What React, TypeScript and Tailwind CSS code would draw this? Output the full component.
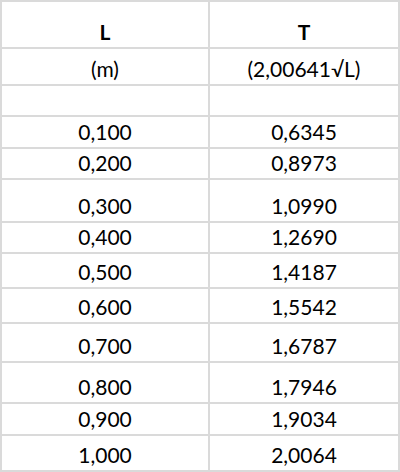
import React from "react";

const rows: { l: string; t: string; h: string }[] = [
  { l: "(m)", t: "(2,00641√L)", h: "h-[37px]" },
  { l: "", t: "", h: "h-[31px]" },
  { l: "0,100", t: "0,6345", h: "h-[32px]" },
  { l: "0,200", t: "0,8973", h: "h-[31px]" },
  { l: "0,300", t: "1,0990", h: "h-[43px]" },
  { l: "0,400", t: "1,2690", h: "h-[31px]" },
  { l: "0,500", t: "1,4187", h: "h-[35px]" },
  { l: "0,600", t: "1,5542", h: "h-[35px]" },
  { l: "0,700", t: "1,6787", h: "h-[39px]" },
  { l: "0,800", t: "1,7946", h: "h-[41px]" },
  { l: "0,900", t: "1,9034", h: "h-[32px]" },
  { l: "1,000", t: "2,0064", h: "h-[36px]" },
];

export default function App() {
  return (
    <div
      className="w-[400px] h-[472px] bg-white border-2 border-[#dadada] text-black text-[21px] leading-none"
      style={{ fontFamily: "Lato, 'Open Sans', sans-serif" }}
    >
      {/* Header */}
      <div className="grid grid-cols-[208px_1fr] h-[45px] font-bold">
        <div className="flex items-end justify-center pb-[5px] border-r-2 border-[#dadada]">L</div>
        <div className="flex items-end justify-center pb-[5px]">T</div>
      </div>

      {rows.map((r, i) => (
        <div key={i} className={`grid grid-cols-[208px_1fr] border-t-2 border-[#dadada] ${r.h}`}>
          <div className="flex items-end justify-center pb-[5px] border-r-2 border-[#dadada]">{r.l}</div>
          <div className="flex items-end justify-center pb-[5px]">{r.t}</div>
        </div>
      ))}
    </div>
  );
}
